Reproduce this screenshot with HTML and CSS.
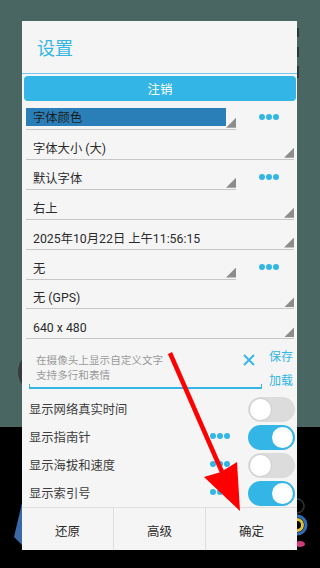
FILE: index.html
```html
<!DOCTYPE html>
<html lang="zh-CN">
<head>
    <meta charset="UTF-8">
    <meta name="viewport" content="width=device-width, initial-scale=1.0">
    <title>设置</title>
    <link rel="stylesheet" href="styles.css">
</head>
<body>
    <!-- Camera screen behind the dialog -->
    <svg class="backdrop" width="320" height="568" viewBox="0 0 320 568">
        <circle cx="40" cy="372" r="22" fill="#353c3b"/>
        <rect x="297" y="28" width="2" height="9" fill="#2a3836"/>
        <rect x="297" y="47" width="2" height="10" fill="#2a3836"/>
        <rect x="297" y="66" width="2" height="12" fill="#2a3836"/>
        <polygon points="22,503 14,537 22,545" fill="#3a69a8"/>
        <circle cx="297" cy="506" r="7" fill="none" stroke="#333" stroke-width="1.5"/>
        <circle cx="297" cy="525" r="9" fill="none" stroke="#2f6db8" stroke-width="3"/>
        <circle cx="297" cy="525" r="5.5" fill="none" stroke="#e2c23a" stroke-width="3"/>
        <ellipse cx="300" cy="544" rx="5" ry="3" fill="#d23a7a"/>
    </svg>

    <div class="dialog">
        <div class="dialog-title">设置</div>
        <div class="logout-btn">注销</div>

        <div class="spin-row">
            <div class="spinner short">
                <span class="spin-value selected">字体颜色</span>
                <span class="spin-arrow"></span>
            </div>
            <div class="more"><i></i><i></i><i></i></div>
        </div>
        <div class="spin-row">
            <div class="spinner">
                <span class="spin-value">字体大小 (大)</span>
                <span class="spin-arrow"></span>
            </div>
        </div>
        <div class="spin-row">
            <div class="spinner short">
                <span class="spin-value">默认字体</span>
                <span class="spin-arrow"></span>
            </div>
            <div class="more"><i></i><i></i><i></i></div>
        </div>
        <div class="spin-row">
            <div class="spinner">
                <span class="spin-value">右上</span>
                <span class="spin-arrow"></span>
            </div>
        </div>
        <div class="spin-row">
            <div class="spinner">
                <span class="spin-value">2025年10月22日 上午11:56:15</span>
                <span class="spin-arrow"></span>
            </div>
        </div>
        <div class="spin-row">
            <div class="spinner short">
                <span class="spin-value">无</span>
                <span class="spin-arrow"></span>
            </div>
            <div class="more"><i></i><i></i><i></i></div>
        </div>
        <div class="spin-row">
            <div class="spinner">
                <span class="spin-value">无 (GPS)</span>
                <span class="spin-arrow"></span>
            </div>
        </div>
        <div class="spin-row">
            <div class="spinner">
                <span class="spin-value">640 x 480</span>
                <span class="spin-arrow"></span>
            </div>
        </div>

        <div class="text-row">
            <div class="edit">
                <div class="edit-body">
                    <div class="hint">在摄像头上显示自定义文字<br>支持多行和表情</div>
                    <svg class="clear" width="12" height="12" viewBox="0 0 12 12">
                        <path d="M1 1 L11 11 M11 1 L1 11" stroke="#33b5e5" stroke-width="1.8"/>
                    </svg>
                </div>
                <div class="edit-line"></div>
            </div>
            <div class="edit-actions">
                <span>保存</span>
                <span>加载</span>
            </div>
        </div>

        <div class="switch-row">
            <span class="switch-label">显示网络真实时间</span>
            <span class="switch"><b></b></span>
        </div>
        <div class="switch-row">
            <span class="switch-label">显示指南针</span>
            <div class="more small"><i></i><i></i><i></i></div>
            <span class="switch on"><b></b></span>
        </div>
        <div class="switch-row">
            <span class="switch-label">显示海拔和速度</span>
            <div class="more small"><i></i><i></i><i></i></div>
            <span class="switch"><b></b></span>
        </div>
        <div class="switch-row">
            <span class="switch-label">显示索引号</span>
            <div class="more small"><i></i><i></i><i></i></div>
            <span class="switch on"><b></b></span>
        </div>

        <div class="dialog-buttons">
            <span>还原</span>
            <span>高级</span>
            <span>确定</span>
        </div>
    </div>

    <!-- Red arrow drawn over the screenshot -->
    <svg class="arrow" width="320" height="568" viewBox="0 0 320 568">
        <line x1="170" y1="353" x2="222" y2="472" stroke="#ff0000" stroke-width="4.5"/>
        <polygon points="204,477 221,472 237,462 240,511" fill="#ff0000"/>
    </svg>
</body>
</html>
```

FILE: styles.css
```css
/* General */
body {
    margin: 0;
    width: 320px;
    height: 568px;
    overflow: hidden;
    position: relative;
    font-family: Roboto, "Noto Sans CJK SC", sans-serif;
    background: linear-gradient(#4a6662 0, #4a6662 427px, #000 427px);
    color: #333;
}

.backdrop,
.arrow {
    position: absolute;
    left: 0;
    top: 0;
}

/* Dialog */
.dialog {
    position: absolute;
    left: 22px;
    top: 21px;
    width: 275px;
    height: 529px;
    background: #f5f5f5;
    display: flex;
    flex-direction: column;
}

.dialog-title {
    height: 52px;
    border-bottom: 1px solid #72c8ec;
    padding-left: 15px;
    display: flex;
    align-items: center;
    font-size: 18px;
    color: #33b5e5;
}

.logout-btn {
    margin: 2px 1px 0 2px;
    height: 25px;
    border-radius: 4px;
    background: #33b5e5;
    color: #fff;
    font-size: 12.5px;
    display: flex;
    align-items: center;
    justify-content: center;
}

/* Spinners */
.spin-row {
    height: 30px;
    padding: 0 3px 0 4px;
    display: flex;
}

.spinner {
    flex: 1;
    height: 28px;
    border-bottom: 1px solid #c6c6c6;
    display: flex;
}

.spinner.short {
    flex: none;
    width: 210px;
}

.spin-value {
    flex: 1;
    margin-top: 8px;
    height: 18px;
    line-height: 20px;
    padding-left: 7px;
    font-size: 12.3px;
    color: #2b2b2b;
    white-space: nowrap;
}

.spin-value.selected {
    flex: none;
    width: 200px;
    box-sizing: border-box;
    margin-top: 7px;
    background: #2a7fb8;
    color: #1e1e1e;
}

.spin-arrow {
    align-self: flex-end;
    width: 10px;
    height: 10px;
    margin-left: auto;
    margin-bottom: 1px;
    background: #8c8c8c;
    clip-path: polygon(100% 0, 100% 100%, 0 100%);
}

.more {
    flex: 1;
    display: flex;
    justify-content: center;
    align-items: flex-start;
    gap: 1px;
    padding: 13px 0 0 8px;
}

.more i {
    width: 6px;
    height: 6px;
    border-radius: 50%;
    background: #33b5e5;
}

.more.small {
    flex: none;
    padding: 0;
    margin-right: 18px;
    margin-top: -2px;
    align-self: center;
}

/* Custom text */
.text-row {
    height: 55px;
    display: flex;
}

.edit {
    width: 233px;
    margin-left: 7px;
}

.edit-body {
    height: 44px;
    display: flex;
    padding: 13px 7px 0 7px;
    box-sizing: border-box;
}

.hint {
    flex: 1;
    font-size: 10.6px;
    line-height: 15px;
    color: #9a9a9a;
}

.clear {
    margin-top: 1px;
}

.edit-line {
    height: 3px;
    border: 1px solid #33b5e5;
    border-top: none;
    border-bottom-width: 2px;
}

.edit-actions {
    flex: 1;
    display: flex;
    flex-direction: column;
    align-items: center;
    padding: 5px 0 0 3px;
    font-size: 12px;
    line-height: 24px;
    color: #33b5e5;
}

/* Switches */
.switch-row {
    height: 28px;
    padding: 0 2px 0 7px;
    display: flex;
    align-items: center;
}

.switch-label {
    flex: 1;
    font-size: 12.3px;
    color: #3c3c3c;
}

.switch {
    width: 47px;
    height: 25px;
    border-radius: 13px;
    background: #dcdcdc;
    box-sizing: border-box;
    padding: 2px;
    display: flex;
}

.switch b {
    width: 21px;
    height: 21px;
    border-radius: 50%;
    background: #fff;
    box-shadow: 0 0 0 1px #d0d0d0;
}

.switch.on {
    background: #33b5e5;
    justify-content: flex-end;
}

.switch.on b {
    box-shadow: none;
}

/* Bottom buttons */
.dialog-buttons {
    margin-top: auto;
    height: 42px;
    border-top: 1px solid #dedede;
    display: grid;
    grid-template-columns: 91px 92px 1fr;
}

.dialog-buttons span {
    display: flex;
    align-items: center;
    justify-content: center;
    padding-top: 2px;
    font-size: 12.5px;
    color: #2b2b2b;
}

.dialog-buttons span + span {
    border-left: 1px solid #dedede;
}
```
